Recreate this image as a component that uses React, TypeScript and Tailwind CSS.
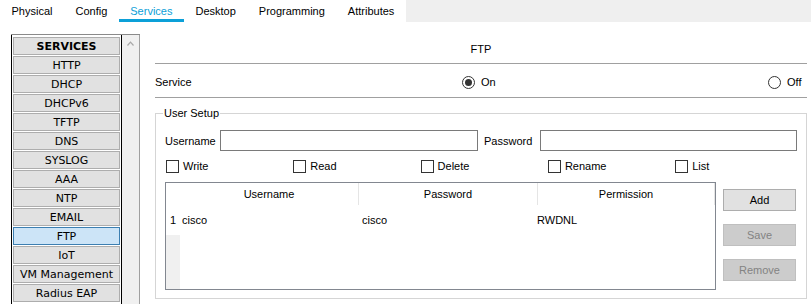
import React from 'react'

const TABS = ['Physical', 'Config', 'Services', 'Desktop', 'Programming', 'Attributes']

const SERVICES = [
  'HTTP', 'DHCP', 'DHCPv6', 'TFTP', 'DNS', 'SYSLOG', 'AAA', 'NTP', 'EMAIL', 'FTP', 'IoT', 'VM Management', 'Radius EAP',
]

const PERMS = ['Write', 'Read', 'Delete', 'Rename', 'List']

function Radio({ checked }: { checked?: boolean }) {
  return (
    <span className="w-[13px] h-[13px] rounded-full border border-[#333] bg-white flex items-center justify-center">
      {checked && <span className="w-[7px] h-[7px] rounded-full bg-[#333]" />}
    </span>
  )
}

function SideButton({ label, active, bold }: { label: string; active?: boolean; bold?: boolean }) {
  return (
    <div
      className={`h-[18px] flex items-center justify-center border leading-none ${
        active ? 'bg-[#cce4f7] border-[#3c7fb1]' : 'bg-[#e1e1e1] border-[#adadad]'
      } ${bold ? 'font-bold' : ''}`}
    >
      {label}
    </div>
  )
}

function ActionButton({ label, disabled }: { label: string; disabled?: boolean }) {
  return (
    <div
      className={`w-[73px] h-[22px] flex items-center justify-center border ${
        disabled ? 'bg-[#cccccc] border-[#bfbfbf] text-[#838383]' : 'bg-[#e1e1e1] border-[#adadad] text-black'
      }`}
    >
      {label}
    </div>
  )
}

export default function App() {
  return (
    <div className="w-[811px] h-[304px] overflow-hidden bg-white text-[11px] text-black font-['Liberation_Sans',Arial,sans-serif] leading-[14px]">
      {/* Tabs */}
      <div className="flex h-[22px]">
        <div className="flex">
          {TABS.map((t) => (
            <div
              key={t}
              className={`px-[11.5px] h-[22px] pt-[4px] border-b-[3px] ${
                t === 'Services' ? 'text-[#0ca0d8] border-[#0ca0d8]' : 'border-transparent'
              }`}
            >
              {t}
            </div>
          ))}
        </div>
        <div className="flex-1 bg-[#efefef]" />
      </div>

      <div className="flex">
        {/* Service list */}
        <div className="ml-[11px] mt-[12px] flex h-[300px] border-t border-[#8a8a8a]">
          <div className="w-[111px] border-l border-r border-black pt-[2px] px-[1px] flex flex-col gap-[1px] font-['DejaVu_Sans',Verdana,sans-serif] text-[11px]">
            <SideButton label="SERVICES" bold />
            {SERVICES.map((s) => (
              <SideButton key={s} label={s} active={s === 'FTP'} />
            ))}
          </div>
          <div className="w-[18px] bg-[#f0f0f0] border-r border-[#a0a0a0]">
            <div className="h-[17px] flex items-center justify-center">
              <svg width="7" height="5" viewBox="0 0 7 5">
                <path d="M0.5 4.5 L3.5 1.2 L6.5 4.5" fill="none" stroke="#a8a8a8" strokeWidth="1.2" />
              </svg>
            </div>
          </div>
        </div>

        {/* FTP panel */}
        <div className="ml-[15px] w-[652px]">
          <div className="pt-[20px] pb-[7px] text-center border-b border-[#a0a0a0]">FTP</div>
          <div className="h-[34px] pt-[3px] flex items-center border-b border-[#a0a0a0]">
            <span className="w-[307px]">Service</span>
            <Radio checked />
            <span className="ml-[6px] w-[287px]">On</span>
            <Radio />
            <span className="ml-[6px]">Off</span>
          </div>

          <fieldset className="mt-[8px] border border-[#d5d5d5] pb-[8px]">
            <legend className="ml-[7px] px-[1px]">User Setup</legend>

            <div className="flex items-center mt-[10px] pl-[9px]">
              <span className="w-[55px]">Username</span>
              <div className="w-[258px] h-[21px] border border-[#7a7a7a] bg-white" />
              <span className="ml-[6px] w-[56px]">Password</span>
              <div className="w-[257px] h-[21px] border border-[#7a7a7a] bg-white" />
            </div>

            <div className="flex mt-[8px] pl-[10px]">
              {PERMS.map((p) => (
                <div key={p} className="w-[127.3px] flex items-center">
                  <span className="w-[13px] h-[13px] border border-[#333] bg-white" />
                  <span className="ml-[4px]">{p}</span>
                </div>
              ))}
            </div>

            <div className="flex mt-[9px] pl-[9px]">
              <div className="w-[551px] h-[108px] border border-[#828790] flex">
                <div className="w-[14px] flex flex-col">
                  <div className="h-[22px]" />
                  <div className="h-[30px] flex items-center justify-center">1</div>
                  <div className="flex-1 bg-[#f0f0f0]" />
                </div>
                <div className="w-[179px]">
                  <div className="h-[22px] flex items-center justify-center border-r border-[#e5e5e5]">Username</div>
                  <div className="h-[30px] flex items-center pl-[2px]">cisco</div>
                </div>
                <div className="w-[179px]">
                  <div className="h-[22px] flex items-center justify-center border-r border-[#e5e5e5]">Password</div>
                  <div className="h-[30px] flex items-center pl-[3px]">cisco</div>
                </div>
                <div className="w-[177px]">
                  <div className="h-[22px] flex items-center justify-center border-r border-[#e5e5e5]">Permission</div>
                  <div className="h-[30px] flex items-center ml-[-1px]">RWDNL</div>
                </div>
              </div>

              <div className="ml-[7px] mt-[7px] flex flex-col gap-[13px]">
                <ActionButton label="Add" />
                <ActionButton label="Save" disabled />
                <ActionButton label="Remove" disabled />
              </div>
            </div>
          </fieldset>
        </div>
      </div>
    </div>
  )
}
